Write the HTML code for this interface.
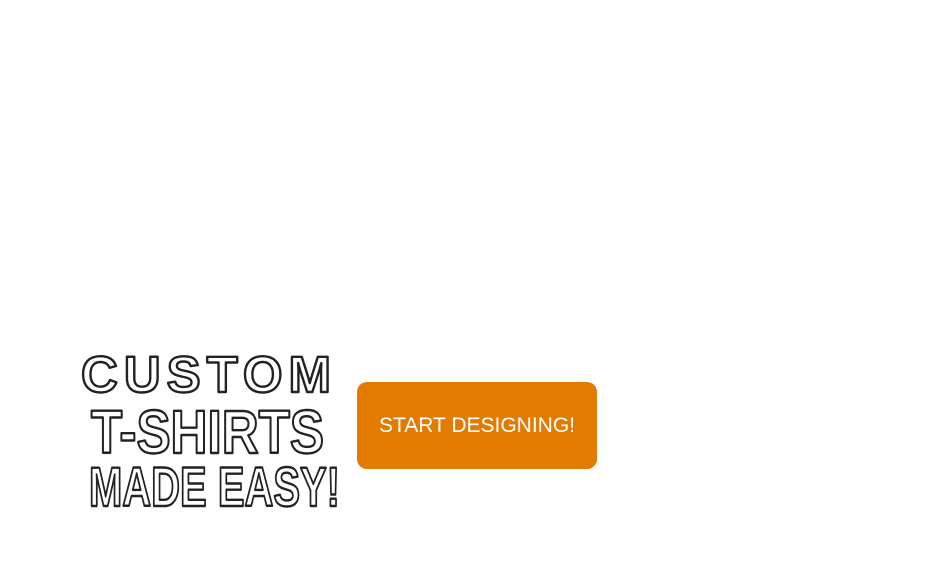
<!DOCTYPE html>
<html><head><meta charset="utf-8"><style>
html,body{margin:0;padding:0;background:#fff;width:950px;height:580px;overflow:hidden}
svg{position:absolute;left:0;top:0}
.btn{position:absolute;left:357px;top:382px;width:240px;height:87px;background:#e27b00;border-radius:10px;color:#fff;font-family:"Liberation Sans",sans-serif;font-size:21px;font-weight:normal;line-height:87px;text-align:center}
</style></head><body>
<svg width="950" height="580" xmlns="http://www.w3.org/2000/svg">
<g font-family="Liberation Sans, sans-serif" font-weight="bold" fill="#fff" stroke="#222" stroke-width="2.4" stroke-linejoin="round">
<text x="81" y="392" font-size="51" textLength="250" lengthAdjust="spacing">CUSTOM</text>
<text x="91" y="453" font-size="61" textLength="233" lengthAdjust="spacingAndGlyphs">T-SHIRTS</text>
<text x="89" y="506" font-size="56" textLength="251" lengthAdjust="spacingAndGlyphs">MADE EASY!</text>
</g>
</svg>
<div class="btn">START DESIGNING!</div>
</body></html>
